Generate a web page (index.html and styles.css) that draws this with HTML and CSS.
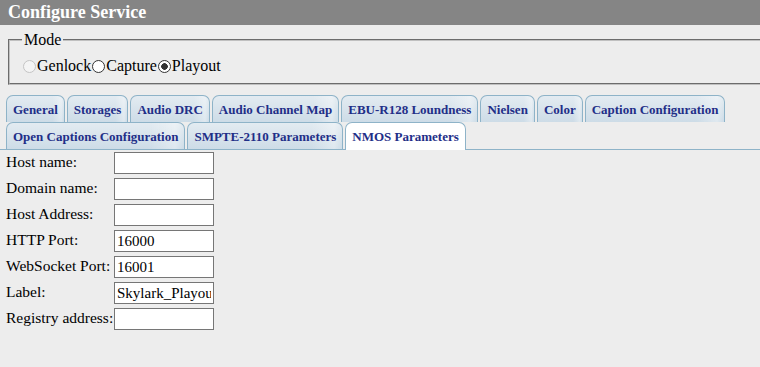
FILE: index.html
```
<!DOCTYPE html>
<html>
<head>
<meta charset="utf-8">
<title>Configure Service</title>
<link rel="stylesheet" href="styles.css">
</head>
<body>
<div class="page">
  <div class="title">Configure Service</div>
  <fieldset class="mode">
    <legend>Mode</legend>
    <label class="opt"><input type="radio" name="mode" disabled>Genlock</label><label class="opt"><input type="radio" name="mode">Capture</label><label class="opt"><input type="radio" name="mode" checked>Playout</label>
  </fieldset>
  <ul class="tabs">
    <li class="tab">General</li>
    <li class="tab">Storages</li>
    <li class="tab">Audio DRC</li>
    <li class="tab">Audio Channel Map</li>
    <li class="tab">EBU-R128 Loundness</li>
    <li class="tab">Nielsen</li>
    <li class="tab">Color</li>
    <li class="tab">Caption Configuration</li>
    <li class="tab">Open Captions Configuration</li>
    <li class="tab">SMPTE-2110 Parameters</li>
    <li class="tab active">NMOS Parameters</li>
  </ul>
  <div class="form">
    <label class="lbl">Host name:</label><input class="field" type="text">
    <label class="lbl">Domain name:</label><input class="field" type="text">
    <label class="lbl">Host Address:</label><input class="field" type="text">
    <label class="lbl">HTTP Port:</label><input class="field" type="text" value="16000">
    <label class="lbl">WebSocket Port:</label><input class="field" type="text" value="16001">
    <label class="lbl">Label:</label><input class="field" type="text" value="Skylark_Playout">
    <label class="lbl">Registry address:</label><input class="field" type="text">
  </div>
</div>
</body>
</html>
```

FILE: styles.css
```
html, body {
  margin: 0;
  padding: 0;
  background: #ededed;
  overflow: hidden;
}
.page {
  width: 760px;
  height: 367px;
  overflow: hidden;
  font-family: "Liberation Serif", "Times New Roman", serif;
  color: #000;
}
.title {
  background: #858585;
  color: #fff;
  font-weight: bold;
  font-size: 18px;
  height: 25px;
  line-height: 24px;
  padding-left: 8px;
}
.mode {
  margin: 6px -14px 0 8px;
  padding: 8px 12px 8px 12px;
  border: 2px groove #c0c0c0;
  font-size: 16px;
}
.mode legend {
  padding: 0 2px;
  font-size: 16px;
}
.opt input {
  -webkit-appearance: none;
  appearance: none;
  box-sizing: border-box;
  margin: 0 1px 0 1px;
  vertical-align: -2px;
  width: 13px;
  height: 13px;
  border: 1px solid #333;
  border-radius: 50%;
  background: #fff;
}
.opt input:disabled {
  border-color: #c4c4c4;
  background: #f4f4f4;
}
.opt input:checked {
  background: radial-gradient(circle, #333 0, #333 3px, #fff 3.6px);
}
.tabs {
  list-style: none;
  margin: 10px 0 0 0;
  padding: 0 0 0 6px;
  display: flex;
  flex-wrap: wrap;
  border-bottom: 1px solid #8eb3c8;
}
.tab {
  box-sizing: border-box;
  height: 27px;
  margin-right: 2px;
  padding: 7px 6px 0 6px;
  border: 1px solid #8eb3c8;
  border-bottom: 0;
  border-radius: 7px 7px 0 0;
  background: linear-gradient(90deg, rgba(255,255,255,0) 80%, rgba(255,255,255,0.35) 95%, rgba(255,255,255,0) 100%), linear-gradient(#e3ebf1, #cddce7);
  color: #1f2f88;
  font-weight: bold;
  font-size: 13px;
  line-height: 14px;
  white-space: nowrap;
}
.tab.active {
  background: #fff;
  height: 28px;
  margin-bottom: -1px;
}
.form {
  display: grid;
  grid-template-columns: 108px 100px;
  row-gap: 4px;
  padding: 2px 0 0 6px;
}
.lbl {
  font-size: 15.5px;
  line-height: 17px;
  white-space: nowrap;
  align-self: start;
  padding-top: 1px;
}
.field {
  box-sizing: border-box;
  width: 100px;
  height: 22px;
  margin: 0;
  padding: 1px 2px;
  border: 1px solid #767676;
  background: #fff;
  font-family: "Liberation Serif", "Times New Roman", serif;
  font-size: 15px;
  color: #000;
}
```
